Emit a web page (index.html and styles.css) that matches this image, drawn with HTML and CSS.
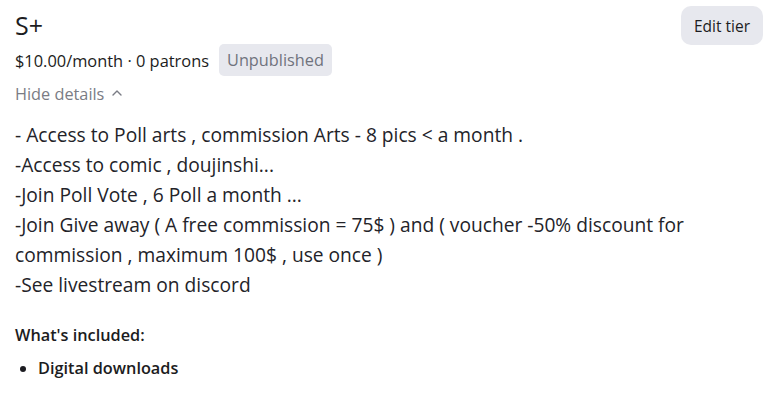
FILE: index.html
```html
<!DOCTYPE html>
<html>
<head>
<meta charset="utf-8">
<link rel="stylesheet" href="styles.css">
</head>
<body>
<div class="tier">
  <div class="head">
    <div class="info">
      <h2 class="title">S+</h2>
      <div class="meta">
        <span class="price">$10.00/month · 0 patrons</span>
        <span class="badge">Unpublished</span>
      </div>
      <div class="toggle">Hide details
        <svg class="chev" width="12" height="12" viewBox="0 0 12 12"><path d="M2 8 L6 4 L10 8" fill="none" stroke="currentColor" stroke-width="1.4" stroke-linecap="round" stroke-linejoin="round"/></svg>
      </div>
    </div>
    <button class="edit">Edit tier</button>
  </div>
  <div class="desc">
    <p>- Access to Poll arts , commission Arts - 8 pics &lt; a month .</p>
    <p>-Access to comic , doujinshi...</p>
    <p>-Join Poll Vote , 6 Poll a month ...</p>
    <p>-Join Give away ( A free commission = 75$ ) and ( voucher -50% discount for commission , maximum 100$ , use once )</p>
    <p>-See livestream on discord</p>
  </div>
  <div class="included">
    <div class="inc-title">What's included:</div>
    <ul class="inc-list">
      <li>Digital downloads</li>
    </ul>
  </div>
</div>
</body>
</html>
```
FILE: styles.css
```css
* { box-sizing: border-box; }
body {
  margin: 0;
  background: #fff;
  font-family: "Open Sans", "Noto Sans", sans-serif;
  color: #1c1c21;
}
.tier {
  padding: 6px 18px 0 15px;
}
.head {
  display: flex;
  justify-content: space-between;
  align-items: flex-start;
}
.title {
  margin: 0;
  font-size: 25px;
  font-weight: 500;
  line-height: 38px;
}
.meta {
  display: flex;
  align-items: center;
  gap: 10px;
  margin-top: 0;
}
.price {
  font-size: 16.4px;
}
.badge {
  background: #e7e8ee;
  color: #70737d;
  font-size: 16.3px;
  border-radius: 5px;
  padding: 4px 8px;
  line-height: 24px;
}
.toggle {
  margin-top: 6px;
  color: #7a7c85;
  font-size: 16.3px;
  line-height: 24px;
  display: flex;
  align-items: center;
  gap: 7px;
}
.chev { margin-top: -2px; }
.edit {
  border: none;
  background: #e7e8ee;
  border-radius: 10px;
  font-family: inherit;
  font-size: 15.5px;
  color: #1c1c21;
  padding: 0 13px;
  height: 39px;
  cursor: pointer;
}
.desc {
  margin-top: 14px;
  font-size: 19.2px;
  line-height: 30px;
  color: #232329;
}
.desc p { margin: 0; }
.included { margin-top: 23px; }
.inc-title {
  font-size: 16.3px;
  font-weight: 600;
  line-height: 24px;
}
.inc-list {
  margin: 9px 0 0;
  padding-left: 23px;
  font-size: 16.3px;
  font-weight: 600;
  line-height: 24px;
}
```
